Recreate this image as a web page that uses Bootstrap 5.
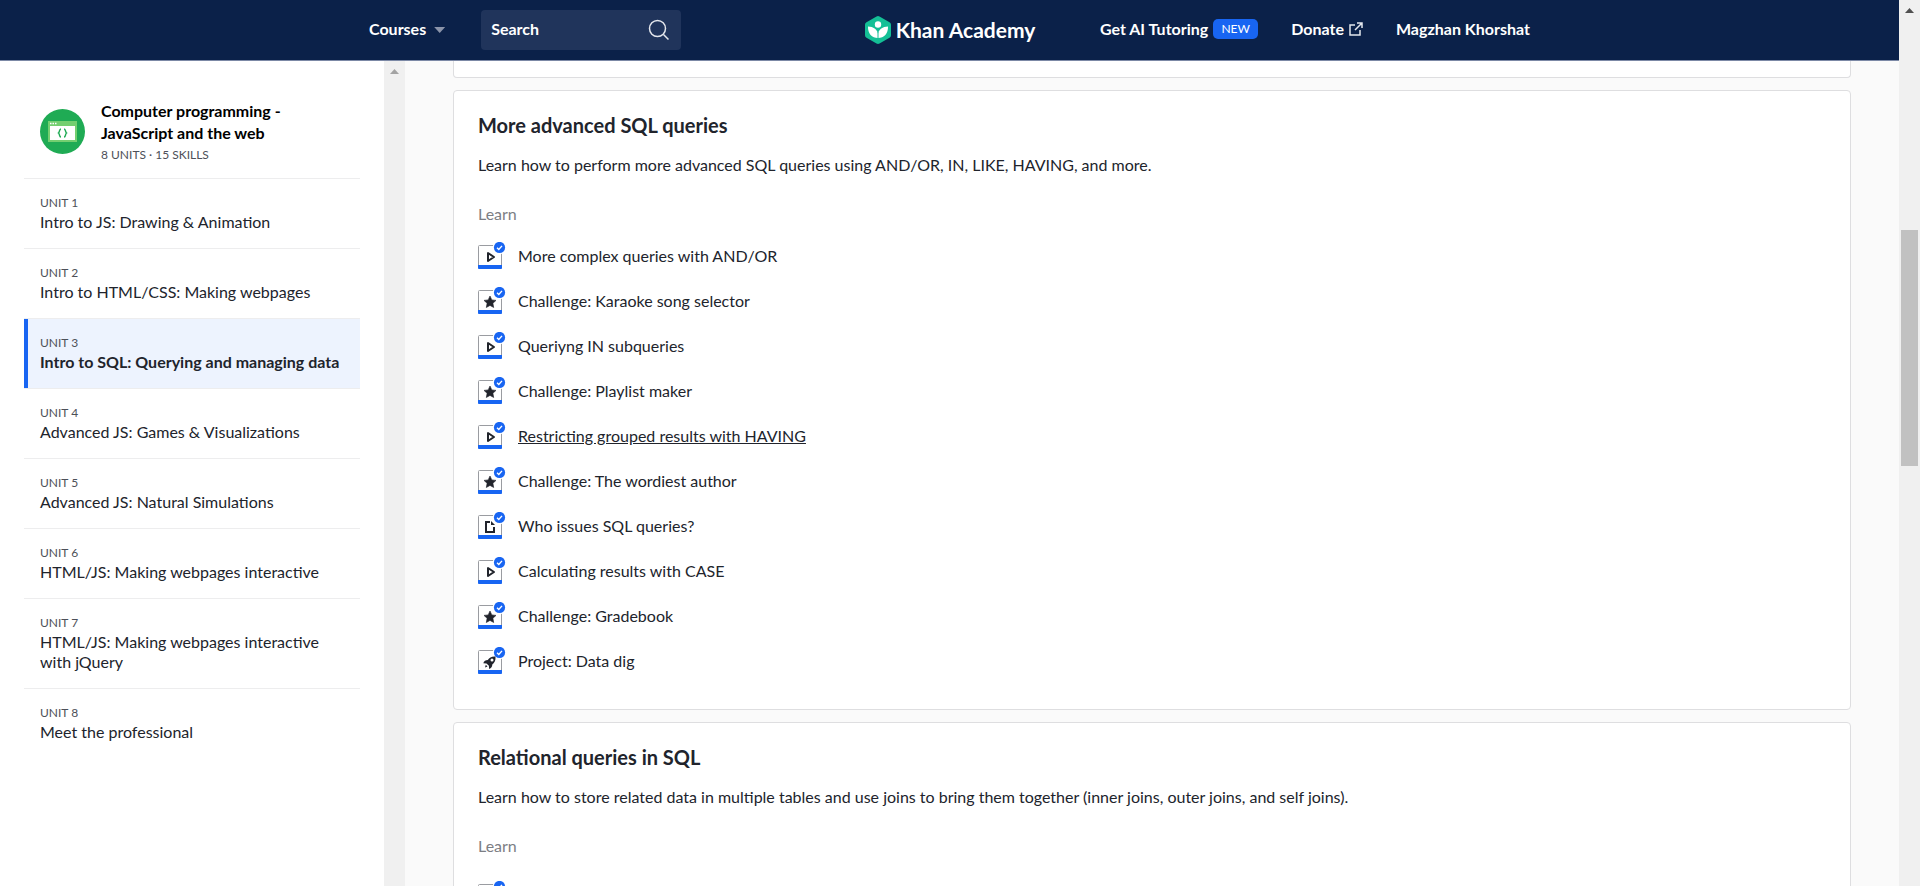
<!DOCTYPE html>
<html lang="en">
<head>
<meta charset="utf-8">
<meta name="viewport" content="width=device-width, initial-scale=1">
<title>Intro to SQL: Querying and managing data | Khan Academy</title>
<link href="https://cdn.jsdelivr.net/npm/bootstrap@5.3.0/dist/css/bootstrap.min.css" rel="stylesheet">
<style>
  :root { --navy: #0b2149; --blue: #1865f2; --ink: #21242c; }
  body { font-family: "Lato", sans-serif; font-size: 16px; line-height: 20px; color: var(--ink); background: #fafafa; }
  a { color: inherit; text-decoration: none; }
  .topbar { background: var(--navy); height: 61px; border-bottom: 1px solid #7c89a6; color: #fff; font-weight: 700; }
  .topbar-inner { max-width: 1161px; }
  .topbar .menu-btn { color: #fff; font-weight: 700; line-height: 20px; padding: 0 0 2px; }
  .topbar nav { gap: 33px; padding-bottom: 2px; }
  .topbar nav a { gap: 5px; }
  .caret { width: 11px; height: 6px; margin-top: 2px; background: #8b94aa; clip-path: polygon(0 0, 100% 0, 50% 100%); }
  .search-box { width: 200px; height: 40px; margin-left: 36px; background: #20345b; border-radius: 4px; }
  .search-box input { font-weight: 700; color: #fff; min-width: 0; padding: 0 0 2px 10px; }
  .search-box input::placeholder { color: #fff; opacity: 1; }
  .brand { font-size: 21px; line-height: 28px; }
  .new-pill { background: var(--blue); font-size: 12px; font-weight: 400; line-height: 20px; width: 45px; border-radius: 5px; }
  .sidebar { width: 384px; padding: 39px 24px 0; }
  .course-title { line-height: 22px; font-weight: 700; color: #000; margin-bottom: 3px; }
  .meta { font-size: 12px; line-height: 16px; color: #4d5058; }
  .course-head { padding: 0 16px 15px; }
  .course-head, .unit { border-bottom: 1px solid #ededee; }
  .unit { padding: 16px; }
  .unit .meta { margin-bottom: 1px; }
  .unit:last-child { border-bottom: 0; }
  .unit.current { background: #edf3fe; box-shadow: inset 4px 0 var(--blue); font-weight: 700; }
  .unit.current .meta { font-weight: 400; }
  .track { width: 21px; background: #f0f0f0; }
  .arrow { width: 9px; height: 5px; background: #a3a3a3; clip-path: polygon(50% 0, 100% 100%, 0 100%); }
  .arrow-dark { background: #505050; }
  .thumb { background: #c1c1c1; width: 17px; height: 236px; margin-top: 217px; }
  .lessons { padding: 0 48px; }
  .topic { border: 1px solid #dedee0; border-radius: 4px; background: #fff; padding: 22px 24px 24px; margin-bottom: 12px; }
  .topic-tail { height: 17px; padding: 0; border-top: 0; border-radius: 0 0 4px 4px; }
  .topic h2 { font-size: 20px; font-weight: 700; line-height: 24px; margin-bottom: 18px; }
  .topic p { margin-bottom: 29px; }
  .topic-label { color: #7c7e84; margin-bottom: 11px; }
  .topic-label.roomy { margin-bottom: 18px; }
  .topic li { padding: 7px 0 10px; }
  .topic li a { gap: 12px; }
  .lesson-icon { width: 28px; height: 28px; }
</style>
</head>
<body>
<svg class="d-none" aria-hidden="true">
  <symbol id="frame" viewBox="0 0 28 28">
    <rect x=".5" y="3.5" width="23" height="23" rx="1" fill="#fff" stroke="#9a9ca1"/>
    <path d="M0 23h24v3a1 1 0 0 1-1 1H1a1 1 0 0 1-1-1z" fill="#1865f2"/>
    <circle cx="21.500" cy="5.500" r="6.800" fill="#fff"/>
    <circle cx="21.500" cy="5.500" r="5.600" fill="#1865f2"/>
    <path d="M19 5.700l1.800 1.800 3.200-3.600" fill="none" stroke="#fff" stroke-width="1.400"/>
  </symbol>
  <symbol id="video" viewBox="0 0 28 28"><use href="#frame"/><path d="M10 11v8l6-4z" fill="none" stroke="#21242c" stroke-width="2" stroke-linejoin="round"/></symbol>
  <symbol id="star" viewBox="0 0 28 28"><use href="#frame"/><path d="M12 9l1.800 3.900 4.200.5-3.100 2.900.8 4.200-3.700-2.100-3.700 2.100.8-4.200L6 13.400l4.200-.5z" fill="#21242c" stroke="#21242c" stroke-width=".6" stroke-linejoin="round"/></symbol>
  <symbol id="article" viewBox="0 0 28 28"><use href="#frame"/><path d="M12 10H8v10h8v-5" fill="none" stroke="#21242c" stroke-width="2"/><path d="M13 9l4 4h-4z" fill="#21242c"/></symbol>
  <symbol id="rocket" viewBox="0 0 28 28"><use href="#frame"/><path fill="#21242c" fill-rule="evenodd" d="M17.500 9.500c-4-.3-6 1.200-7.700 3.500-2.200 0-3.800 1-4.500 3.200l3.200.2 2.400 2.400.2 3.200c2.200-.7 3.200-2.200 3.200-4.500 2.400-1.800 3.500-4 3.200-8zM14 11.500a1.500 1.500 0 1 1 0 3 1.500 1.500 0 0 1 0-3zM7.800 17.700l1.700 1.700-2.500 1z"/></symbol>
</svg>

<div class="d-flex vh-100 overflow-hidden">
  <div class="d-flex flex-column flex-grow-1 overflow-hidden">
    <header class="topbar flex-shrink-0">
      <div class="topbar-inner d-flex align-items-center mx-auto h-100">
        <div class="d-flex align-items-center flex-fill w-50">
          <button class="btn menu-btn border-0 d-flex align-items-center gap-2" type="button">Courses <span class="caret"></span></button>
          <form class="search-box d-flex align-items-center" role="search">
            <input class="bg-transparent border-0 flex-grow-1" type="text" placeholder="Search" aria-label="Search">
            <button class="btn p-0 border-0 me-2" type="submit" aria-label="Submit search"><svg class="d-block" width="28" height="24" viewBox="0 0 28 24" fill="none" stroke="#e4e7ed" stroke-width="1.500"><circle cx="12.500" cy="10.500" r="8"/><path d="M18.500 16.500l5 5"/></svg></button>
          </form>
        </div>
        <a class="brand d-flex align-items-center flex-shrink-0" href="#">
          <svg class="me-1" width="28" height="30" viewBox="0 0 28 30"><path d="M12.500 1.400a3 3 0 0 1 3 0l10 5.800A3 3 0 0 1 27 9.800v10.400a3 3 0 0 1-1.500 2.600l-10 5.800a3 3 0 0 1-3 0l-10-5.800A3 3 0 0 1 1 20.200V9.800a3 3 0 0 1 1.500-2.600z" fill="#14bf96"/><circle cx="14" cy="9.500" r="3.200" fill="#fff"/><path d="M4 11.500c5.500.2 9 3 10 7 1-4 4.500-6.800 10-7 .3 7-4 11.500-10 11.500S3.700 18.500 4 11.500z" fill="#fff"/><path d="M14 17v6" stroke="#14bf96"/></svg>
          Khan Academy
        </a>
        <nav class="d-flex align-items-center justify-content-end flex-fill w-50">
          <a class="d-flex align-items-center" href="#">Get AI Tutoring <span class="new-pill text-center">NEW</span></a>
          <a class="d-flex align-items-center" href="#">Donate <svg width="14" height="14" viewBox="0 0 14 14" fill="none" stroke="#e4e7ed" stroke-width="1.500"><path d="M6 3H1v10h10V8M8 1h5v5M13 1L6 8"/></svg></a>
          <a href="#">Magzhan Khorshat</a>
        </nav>
      </div>
    </header>

    <div class="d-flex flex-grow-1 overflow-hidden">
      <aside class="sidebar bg-white flex-shrink-0">
        <div class="course-head d-flex align-items-center">
          <svg class="flex-shrink-0 me-3" width="45" height="45" viewBox="0 0 45 45"><circle cx="22.500" cy="22.500" r="22.500" fill="#1fab54"/><path d="M8 12h29v21H8z" fill="#74cf70"/><path d="M10 17h25v14H10z" fill="#fff"/><path d="M10 14.500h1.500M12.500 14.500h1.500M15 14.500h1.500" stroke="#fff" stroke-width="1.500"/><path d="M21 20c-2 0-1 3-2.500 4 1.500 1 .5 4 2.500 4M24 20c2 0 1 3 2.500 4-1.500 1-.5 4-2.500 4" fill="none" stroke="#1fab54" stroke-width="1.500"/></svg>
          <div>
            <a class="course-title d-block" href="#">Computer programming - JavaScript and the web</a>
            <div class="meta">8 UNITS · 15 SKILLS</div>
          </div>
        </div>
        <nav>
          <a class="unit d-block" href="#"><div class="meta">UNIT 1</div>Intro to JS: Drawing &amp; Animation</a>
          <a class="unit d-block" href="#"><div class="meta">UNIT 2</div>Intro to HTML/CSS: Making webpages</a>
          <a class="unit d-block current" href="#" aria-current="page"><div class="meta">UNIT 3</div>Intro to SQL: Querying and managing data</a>
          <a class="unit d-block" href="#"><div class="meta">UNIT 4</div>Advanced JS: Games &amp; Visualizations</a>
          <a class="unit d-block" href="#"><div class="meta">UNIT 5</div>Advanced JS: Natural Simulations</a>
          <a class="unit d-block" href="#"><div class="meta">UNIT 6</div>HTML/JS: Making webpages interactive</a>
          <a class="unit d-block" href="#"><div class="meta">UNIT 7</div>HTML/JS: Making webpages interactive with jQuery</a>
          <a class="unit d-block" href="#"><div class="meta">UNIT 8</div>Meet the professional</a>
        </nav>
      </aside>
      <div class="track flex-shrink-0 d-flex justify-content-center pt-2" aria-hidden="true"><div class="arrow"></div></div>

      <main class="lessons flex-grow-1 overflow-hidden">
        <div class="topic topic-tail"></div>
        <section class="topic">
          <h2>More advanced SQL queries</h2>
          <p>Learn how to perform more advanced SQL queries using AND/OR, IN, LIKE, HAVING, and more.</p>
          <div class="topic-label">Learn</div>
          <ul class="list-unstyled mb-0">
            <li><a class="d-flex align-items-center" href="#"><svg class="lesson-icon"><use href="#video"/></svg><span>More complex queries with AND/OR</span></a></li>
            <li><a class="d-flex align-items-center" href="#"><svg class="lesson-icon"><use href="#star"/></svg><span>Challenge: Karaoke song selector</span></a></li>
            <li><a class="d-flex align-items-center" href="#"><svg class="lesson-icon"><use href="#video"/></svg><span>Queriyng IN subqueries</span></a></li>
            <li><a class="d-flex align-items-center" href="#"><svg class="lesson-icon"><use href="#star"/></svg><span>Challenge: Playlist maker</span></a></li>
            <li><a class="d-flex align-items-center" href="#"><svg class="lesson-icon"><use href="#video"/></svg><span class="text-decoration-underline">Restricting grouped results with HAVING</span></a></li>
            <li><a class="d-flex align-items-center" href="#"><svg class="lesson-icon"><use href="#star"/></svg><span>Challenge: The wordiest author</span></a></li>
            <li><a class="d-flex align-items-center" href="#"><svg class="lesson-icon"><use href="#article"/></svg><span>Who issues SQL queries?</span></a></li>
            <li><a class="d-flex align-items-center" href="#"><svg class="lesson-icon"><use href="#video"/></svg><span>Calculating results with CASE</span></a></li>
            <li><a class="d-flex align-items-center" href="#"><svg class="lesson-icon"><use href="#star"/></svg><span>Challenge: Gradebook</span></a></li>
            <li><a class="d-flex align-items-center" href="#"><svg class="lesson-icon"><use href="#rocket"/></svg><span>Project: Data dig</span></a></li>
          </ul>
        </section>
        <section class="topic">
          <h2>Relational queries in SQL</h2>
          <p>Learn how to store related data in multiple tables and use joins to bring them together (inner joins, outer joins, and self joins).</p>
          <div class="topic-label roomy">Learn</div>
          <ul class="list-unstyled mb-0">
            <li><a class="d-flex align-items-center" href="#"><svg class="lesson-icon"><use href="#video"/></svg></a></li>
          </ul>
        </section>
      </main>
    </div>
  </div>
  <div class="track flex-shrink-0 d-flex flex-column align-items-center pt-2" aria-hidden="true">
    <div class="arrow arrow-dark"></div>
    <div class="thumb"></div>
  </div>
</div>
<script src="https://cdn.jsdelivr.net/npm/bootstrap@5.3.0/dist/js/bootstrap.bundle.min.js"></script>
</body>
</html>
